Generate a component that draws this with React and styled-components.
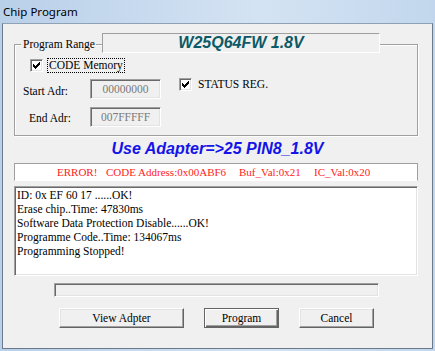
import React from "react";
import styled, { createGlobalStyle } from "styled-components";

const GlobalStyle = createGlobalStyle`
  html, body { margin: 0; padding: 0; overflow: hidden; }
  body { background: #c4d8ee; }
`;

const Frame = styled.div`
  width: 435px;
  height: 351px;
  box-sizing: border-box;
  padding: 0 2px 2px 2px;
  display: flex;
  flex-direction: column;
  background: linear-gradient(90deg, #b9d0e9 0%, #c9dbef 35%, #d4e3f3 60%, #c2d7ed 100%);
  font-family: "Liberation Serif", "Times New Roman", serif;
  font-size: 11.5px;
  color: #000;
`;

const TitleBar = styled.div`
  height: 23px;
  display: flex;
  align-items: center;
  padding-left: 1px;
  font-family: "Noto Sans", "Open Sans", sans-serif;
  font-size: 11.5px;
  color: #000;
`;

const Client = styled.div`
  flex: 1;
  display: flex;
  flex-direction: column;
  padding: 0 14px 0 11px;
  background: #f0f0f0;
  border: 1px solid #6b7a8a;
  border-top-color: #8fa1b4;
`;

const Group = styled.div`
  margin-top: 20px;
  height: 92px;
  box-sizing: border-box;
  border: 1px solid #a0a0a0;
  box-shadow: inset 1px 1px #fff, 1px 1px #fff;
  display: flex;
  flex-direction: column;
`;

const GroupHeader = styled.div`
  margin-top: -12px;
  margin-left: 6px;
  height: 20px;
  display: flex;
  align-items: center;
`;

const Legend = styled.span`
  width: 75px;
  box-sizing: border-box;
  margin-top: 2px;
  padding: 0 2px;
  line-height: 14px;
  background: #f0f0f0;
  white-space: nowrap;
`;

const ChipBox = styled.div`
  margin-left: 6px;
  width: 278px;
  height: 20px;
  box-sizing: border-box;
  display: flex;
  align-items: center;
  justify-content: center;
  background: #f0f0f0;
  border: 1px solid #fff;
  border-top-color: #a0a0a0;
  border-left-color: #a0a0a0;
  font-family: "Liberation Sans", Arial, sans-serif;
  font-weight: bold;
  font-style: italic;
  font-size: 16px;
  color: #0b5a66;
`;

const CheckRow = styled.div`
  display: flex;
  align-items: center;
  margin-top: ${(p) => p.$top || 0}px;
  margin-left: ${(p) => p.$left || 0}px;
  align-self: flex-start;
`;

const Box = styled.span`
  width: 13px;
  height: 13px;
  box-sizing: border-box;
  display: flex;
  align-items: center;
  justify-content: center;
  background: #fff;
  border: 1px solid #fff;
  border-top-color: #a0a0a0;
  border-left-color: #a0a0a0;
  box-shadow: inset 1px 1px #696969, inset -1px -1px #e3e3e3;
`;

const CheckLabel = styled.span`
  margin-left: ${(p) => p.$gap}px;
  padding: 0 1px;
  line-height: 13px;
  border: 1px dotted ${(p) => (p.$focus ? "#000" : "transparent")};
  white-space: nowrap;
`;

const Body = styled.div`
  display: flex;
  margin-top: 6px;
`;

const AddrGrid = styled.div`
  display: grid;
  grid-template-columns: 75px 71px;
  row-gap: 8px;
`;

const AddrLabel = styled.span`
  padding-left: ${(p) => p.$indent}px;
  padding-top: ${(p) => p.$drop}px;
  align-self: center;
  line-height: 14px;
  white-space: nowrap;
`;

const AddrField = styled.div`
  height: 20px;
  box-sizing: border-box;
  display: flex;
  align-items: center;
  justify-content: center;
  background: #f0f0f0;
  border: 1px solid #fff;
  border-top-color: #a0a0a0;
  border-left-color: #a0a0a0;
  box-shadow: inset 1px 1px #696969, inset -1px -1px #e3e3e3;
  color: #7a7a7a;
`;

const Adapter = styled.div`
  margin-top: 3px;
  padding-left: 3px;
  line-height: 20px;
  text-align: center;
  font-family: "Liberation Sans", Arial, sans-serif;
  font-weight: bold;
  font-style: italic;
  font-size: 16px;
  color: #1414e8;
`;

const ErrorBar = styled.div`
  margin-top: 4px;
  height: 18px;
  box-sizing: border-box;
  display: grid;
  grid-template-columns: 49px 133px 75px auto;
  align-items: center;
  padding-left: 42px;
  background: #fff;
  border: 1px solid #a0a0a0;
  border-bottom-color: #fff;
  color: #ff2222;
  font-size: 11px;
  line-height: 16px;
  white-space: nowrap;
`;

const Log = styled.div`
  margin-top: 5px;
  height: 90px;
  box-sizing: border-box;
  padding: 0 2px;
  background: #fff;
  border: 1px solid #fff;
  border-top-color: #a0a0a0;
  border-left-color: #a0a0a0;
  box-shadow: inset 1px 1px #696969, inset -1px -1px #e3e3e3;
  padding-top: 1px;
  line-height: 14px;
`;

const LogLine = styled.div`
  white-space: nowrap;
`;

const Progress = styled.div`
  margin-top: 7px;
  margin-left: 40px;
  width: 325px;
  height: 14px;
  box-sizing: border-box;
  background: #f0f0f0;
  border: 1px solid #fff;
  border-top-color: #a0a0a0;
  border-left-color: #a0a0a0;
  box-shadow: inset 1px 1px #696969, inset -1px -1px #e3e3e3;
`;

const ButtonRow = styled.div`
  display: flex;
  gap: 20px;
  margin-top: 11px;
  margin-left: 45px;
`;

const Button = styled.button`
  width: ${(p) => p.$w}px;
  height: 20px;
  box-sizing: border-box;
  padding: 0;
  font: inherit;
  color: #000;
  background: #f0f0f0;
  border: 1px solid ${(p) => (p.$default ? "#646464" : "#fff")};
  border-right-color: #646464;
  border-bottom-color: #646464;
  box-shadow: ${(p) =>
    p.$default
      ? "inset 1px 1px #fff, inset -1px -1px #646464, inset -2px -2px #a0a0a0"
      : "inset -1px -1px #a0a0a0, inset 1px 1px #e3e3e3"};
  cursor: default;
`;

const Check = () => (
  <svg width="9" height="9" viewBox="0 0 9 9" shapeRendering="crispEdges">
    <path
      d="M1 3h1v1h1v1h1V4h1V3h1V2h1V1h1v3H7v1H6v1H5v1H4v1H3V7H2V6H1z"
      fill="#000"
    />
  </svg>
);

const logLines = [
  "ID: 0x EF 60 17 ......OK!",
  "Erase chip..Time: 47830ms",
  "Software Data Protection Disable......OK!",
  "Programme Code..Time: 134067ms",
  "Programming Stopped!",
];

export default function App() {
  return (
    <>
      <GlobalStyle />
      <Frame>
        <TitleBar>Chip Program</TitleBar>
        <Client>
          <Group>
            <GroupHeader>
              <Legend>Program Range</Legend>
              <ChipBox>W25Q64FW 1.8V</ChipBox>
            </GroupHeader>
            <CheckRow $top={5} $left={15}>
              <Box><Check /></Box>
              <CheckLabel $gap={4} $focus>CODE Memory</CheckLabel>
            </CheckRow>
            <Body>
              <AddrGrid>
                <AddrLabel $indent={8} $drop={3}>Start Adr:</AddrLabel>
                <AddrField>00000000</AddrField>
                <AddrLabel $indent={14} $drop={1}>End Adr:</AddrLabel>
                <AddrField>007FFFFF</AddrField>
              </AddrGrid>
              <CheckRow $top={-2} $left={18}>
                <Box><Check /></Box>
                <CheckLabel $gap={4}>STATUS REG.</CheckLabel>
              </CheckRow>
            </Body>
          </Group>
          <Adapter>Use Adapter=&gt;25 PIN8_1.8V</Adapter>
          <ErrorBar>
            <span>ERROR!</span>
            <span>CODE Address:0x00ABF6</span>
            <span>Buf_Val:0x21</span>
            <span>IC_Val:0x20</span>
          </ErrorBar>
          <Log>
            {logLines.map((l) => (
              <LogLine key={l}>{l}</LogLine>
            ))}
          </Log>
          <Progress />
          <ButtonRow>
            <Button $w={125}>View Adpter</Button>
            <Button $w={75} $default>Program</Button>
            <Button $w={75}>Cancel</Button>
          </ButtonRow>
        </Client>
      </Frame>
    </>
  );
}
